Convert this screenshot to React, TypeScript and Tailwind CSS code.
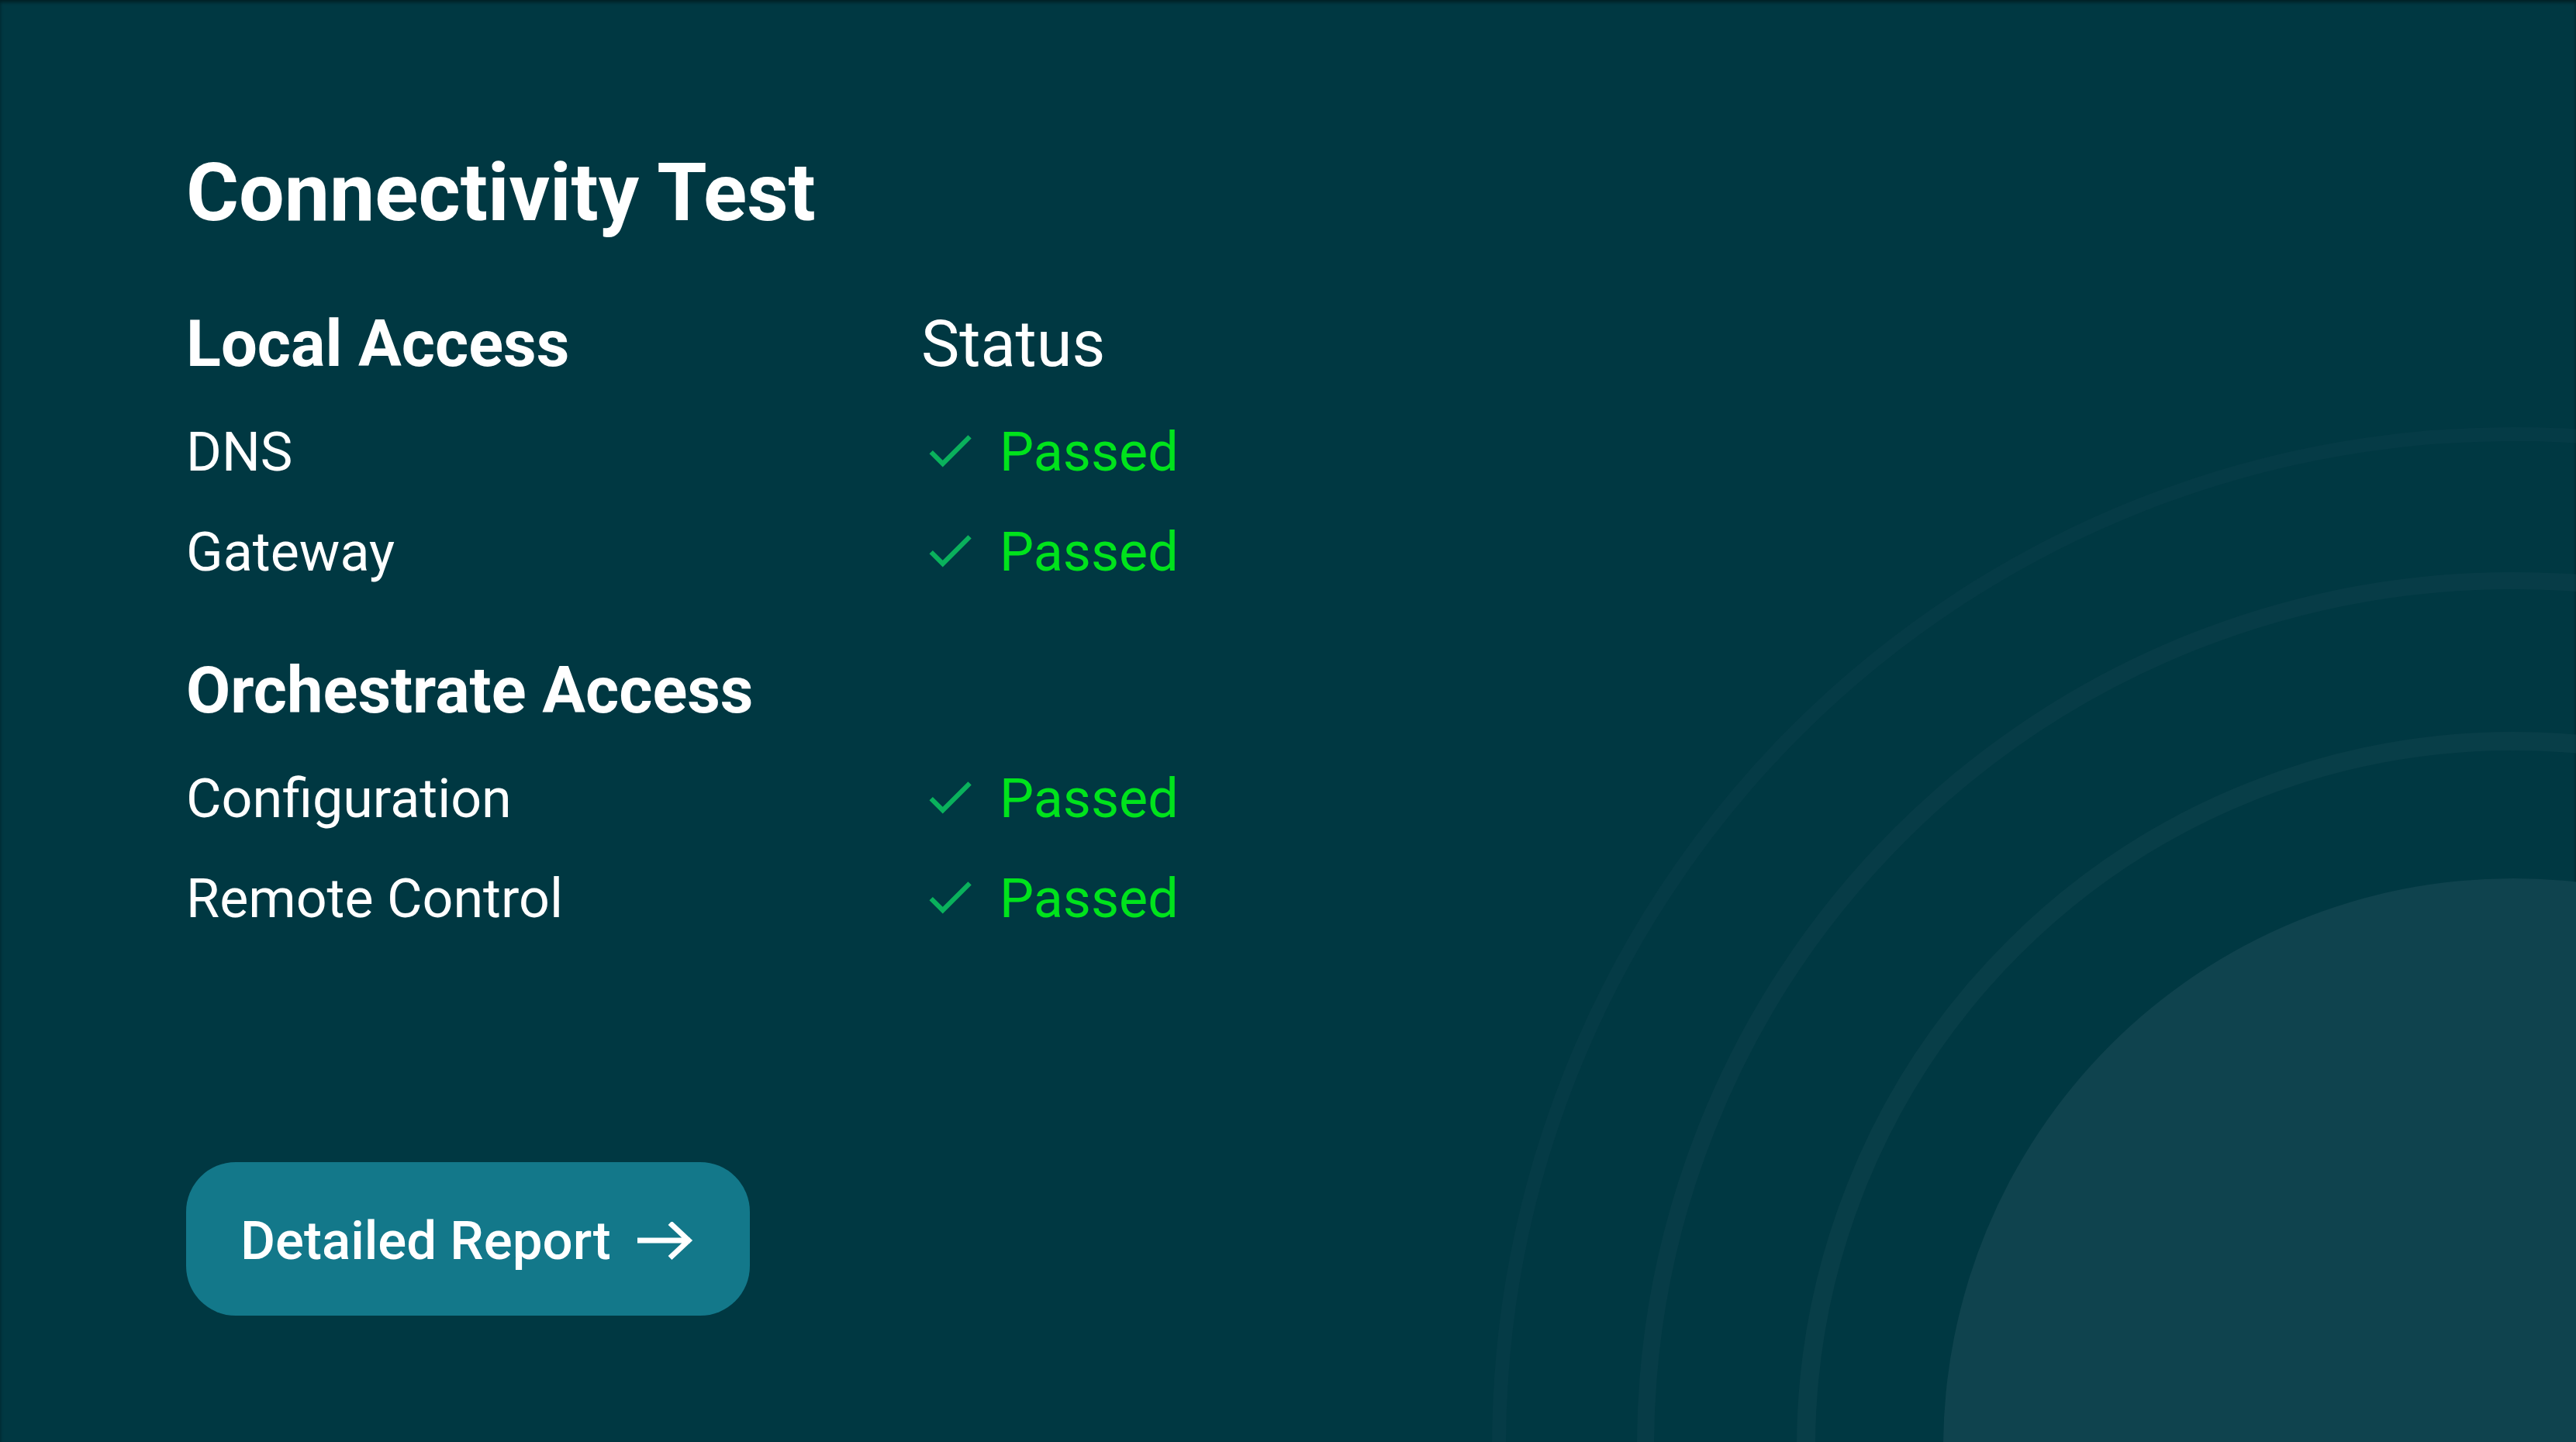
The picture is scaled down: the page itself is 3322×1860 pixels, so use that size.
import React from "react"

type Check = { label: string; status: string }

const local: Check[] = [
  { label: "DNS", status: "Passed" },
  { label: "Gateway", status: "Passed" },
]

const orchestrate: Check[] = [
  { label: "Configuration", status: "Passed" },
  { label: "Remote Control", status: "Passed" },
]

function CheckIcon() {
  return (
    <svg viewBox="0 0 24 24" className="w-[74px] h-[74px] shrink-0 -translate-y-[3px]">
      <path
        d="M9 16.17L4.83 12l-1.42 1.41L9 19 21 7l-1.41-1.41z"
        fill="#0ab15c"
      />
    </svg>
  )
}

function ArrowIcon() {
  return (
    <svg viewBox="0 0 72 50" className="w-[72px] h-[50px] shrink-0">
      <path
        d="M0 24h68M42 1.5l24 22.5-24 22.5"
        fill="none"
        stroke="#ffffff"
        strokeWidth="7"
      />
    </svg>
  )
}

function Row({ item }: { item: Check }) {
  return (
    <div className="grid grid-cols-[948px_auto] h-[129px] items-center text-[70px] leading-[129px] text-white">
      <span>{item.label}</span>
      <div className="flex items-center gap-[27px]">
        <CheckIcon />
        <span className="text-[#00e31c]">{item.status}</span>
      </div>
    </div>
  )
}

function Backdrop() {
  return (
    <svg
      className="absolute inset-0 w-full h-full pointer-events-none"
      viewBox="0 0 3322 1860"
      preserveAspectRatio="none"
    >
      <circle cx="3241" cy="1868" r="1308" fill="none" stroke="#0f434e" strokeOpacity="0.3" strokeWidth="18" />
      <circle cx="3241" cy="1868" r="1119" fill="none" stroke="#0f434e" strokeOpacity="0.45" strokeWidth="22" />
      <circle cx="3241" cy="1868" r="912" fill="none" stroke="#0f434e" strokeOpacity="0.5" strokeWidth="24" />
      <circle cx="3241" cy="1868" r="735" fill="#0f434e" />
    </svg>
  )
}

export default function App() {
  return (
    <div
      className="relative w-[3322px] h-[1860px] overflow-hidden bg-[#003842] shadow-[inset_0_3px_4px_rgba(0,0,0,0.45)]"
      style={{ fontFamily: "Roboto, 'Noto Sans', sans-serif" }}
    >
      <Backdrop />

      <div className="relative flex flex-col items-start pl-[240px] pt-[197px]">
        <h1 className="text-[104px] leading-[104px] font-bold text-white">Connectivity Test</h1>

        {/* Local access */}
        <div className="mt-[101px] grid grid-cols-[948px_auto] text-[83px] leading-[84px] text-white">
          <h2 className="font-bold">Local Access</h2>
          <span>Status</span>
        </div>
        <div className="mt-[33px]">
          {local.map((item) => (
            <Row key={item.label} item={item} />
          ))}
        </div>

        {/* Orchestrate access */}
        <h2 className="mt-[72px] text-[83px] leading-[84px] font-bold text-white">Orchestrate Access</h2>
        <div className="mt-[33px]">
          {orchestrate.map((item) => (
            <Row key={item.label} item={item} />
          ))}
        </div>

        <button className="mt-[275px] flex items-center gap-[34px] h-[198px] pt-[6px] pl-[70px] pr-[73px] rounded-[64px] bg-[#13788a] text-white text-[69px] font-medium">
          <span>Detailed Report</span>
          <ArrowIcon />
        </button>
      </div>
    </div>
  )
}
